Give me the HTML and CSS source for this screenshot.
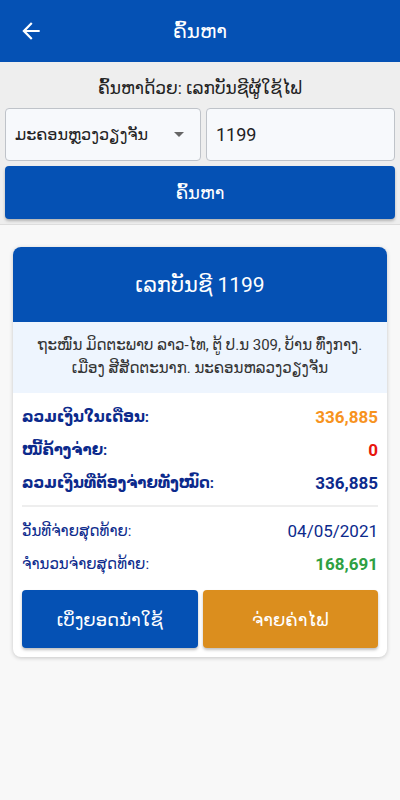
FILE: index.html
```html
<!DOCTYPE html>
<html>
<head>
    <meta charset="utf-8">
    <title>ຄົ້ນຫາ</title>
    <link rel="stylesheet" href="styles.css">
</head>
<body>
    <div class="app-bar">
        <span class="back-btn">
            <svg width="26" height="26" viewBox="0 0 24 24"><path d="M20 11H7.83l5.59-5.59L12 4l-8 8 8 8 1.41-1.41L7.83 13H20v-2z" fill="#fff"/></svg>
        </span>
        <h1 class="app-title">ຄົ້ນຫາ</h1>
    </div>

    <div class="search-panel">
        <p class="search-label">ຄົ້ນຫາດ້ວຍ: ເລກບັນຊີຜູ້ໃຊ້ໄຟ</p>
        <div class="search-fields">
            <div class="field select-field">
                <span>ມະຄອນຫຼວງວຽງຈັນ</span>
                <span class="caret"></span>
            </div>
            <div class="field">1199</div>
        </div>
        <button class="btn btn-blue search-btn">ຄົ້ນຫາ</button>
    </div>

    <div class="content">
        <div class="card">
            <div class="card-head">ເລກບັນຊີ 1199</div>
            <div class="card-address">ຖະໜົນ ມິດຕະພາບ ລາວ-ໄທ, ຕູ້ ປ.ນ 309, ບ້ານ ທົ່ງກາງ. ເມືອງ ສີສັດຕະນາກ. ນະຄອນຫລວງວຽງຈັນ</div>
            <div class="card-body">
                <div class="row bold">
                    <span>ລວມເງິນໃນເດືອນ:</span>
                    <span class="num orange">336,885</span>
                </div>
                <div class="row bold">
                    <span>ໜີ້ຄ້າງຈ່າຍ:</span>
                    <span class="num red">0</span>
                </div>
                <div class="row bold">
                    <span>ລວມເງິນທີ່ຕ້ອງຈ່າຍທັງໝົດ:</span>
                    <span class="num">336,885</span>
                </div>
                <hr class="divider">
                <div class="row">
                    <span>ວັນທີຈ່າຍສຸດທ້າຍ:</span>
                    <span class="num">04/05/2021</span>
                </div>
                <div class="row">
                    <span>ຈຳນວນຈ່າຍສຸດທ້າຍ:</span>
                    <span class="num green bold">168,691</span>
                </div>
                <div class="actions">
                    <button class="btn btn-blue">ເບິ່ງຍອດນຳໃຊ້</button>
                    <button class="btn btn-orange">ຈ່າຍຄ່າໄຟ</button>
                </div>
            </div>
        </div>
    </div>
</body>
</html>
```

FILE: styles.css
```css
body {
    margin: 0;
    font-family: Roboto, "DejaVu Sans", sans-serif;
    background-color: #f8f8f8;
    height: 800px;
}
.app-bar {
    height: 62px;
    background-color: #0551b4;
    display: flex;
    align-items: center;
    box-shadow: 0 1px 4px rgba(0, 0, 0, 0.3);
}
.back-btn {
    width: 62px;
    display: flex;
    justify-content: center;
}
.app-title {
    flex: 1;
    margin: 0 62px 0 0;
    text-align: center;
    color: #fff;
    font-size: 20px;
    font-weight: 500;
}
.search-panel {
    background-color: #eeeeee;
    padding: 12px 5px 5px;
    border-bottom: 1px solid #dddddd;
}
.search-label {
    margin: 0 0 6px;
    text-align: center;
    font-size: 17px;
    color: #222;
    line-height: 28px;
}
.search-fields {
    display: flex;
    gap: 5px;
}
.field {
    flex: 1;
    height: 53px;
    box-sizing: border-box;
    border: 1px solid #bfc3c9;
    border-radius: 4px;
    background-color: #f7f9fc;
    display: flex;
    align-items: center;
    padding: 0 9px;
    font-size: 18px;
    color: #222;
}
.select-field {
    justify-content: space-between;
    padding: 0 16px 0 9px;
    font-size: 16px;
}
.caret {
    width: 0;
    height: 0;
    border-left: 5px solid transparent;
    border-right: 5px solid transparent;
    border-top: 5px solid #666;
}
.btn {
    border: none;
    border-radius: 4px;
    color: #fff;
    font-family: inherit;
    font-size: 18px;
    cursor: pointer;
    box-shadow: 0 2px 3px rgba(0, 0, 0, 0.25);
}
.btn-blue {
    background-color: #0551b4;
}
.btn-orange {
    background-color: #db8e1e;
}
.search-btn {
    display: block;
    width: 100%;
    height: 53px;
    margin-top: 5px;
}
.content {
    padding: 22px 13px;
}
.card {
    background-color: #fff;
    border-radius: 8px;
    box-shadow: 0 1px 4px rgba(0, 0, 0, 0.2);
    overflow: hidden;
}
.card-head {
    background-color: #0551b4;
    color: #fff;
    height: 75px;
    display: flex;
    align-items: center;
    justify-content: center;
    font-size: 21px;
}
.card-address {
    background-color: #eef5fe;
    color: #333;
    text-align: center;
    font-size: 15px;
    line-height: 23px;
    padding: 12px 14px 13px;
}
.card-body {
    padding: 7px 9px 9px;
}
.row {
    display: flex;
    justify-content: space-between;
    align-items: center;
    color: #0c2a8c;
    font-size: 15px;
    height: 33px;
}
.num {
    font-size: 17px;
}
.bold {
    font-weight: bold;
}
.orange {
    color: #f7931e;
}
.red {
    color: #e8160c;
}
.green {
    color: #2ea043;
}
.divider {
    border: none;
    border-top: 2px solid #eeeeee;
    margin: 6px 0 7px;
}
.actions {
    display: flex;
    gap: 5px;
    margin-top: 10px;
}
.actions .btn {
    flex: 1;
    height: 58px;
}
```
